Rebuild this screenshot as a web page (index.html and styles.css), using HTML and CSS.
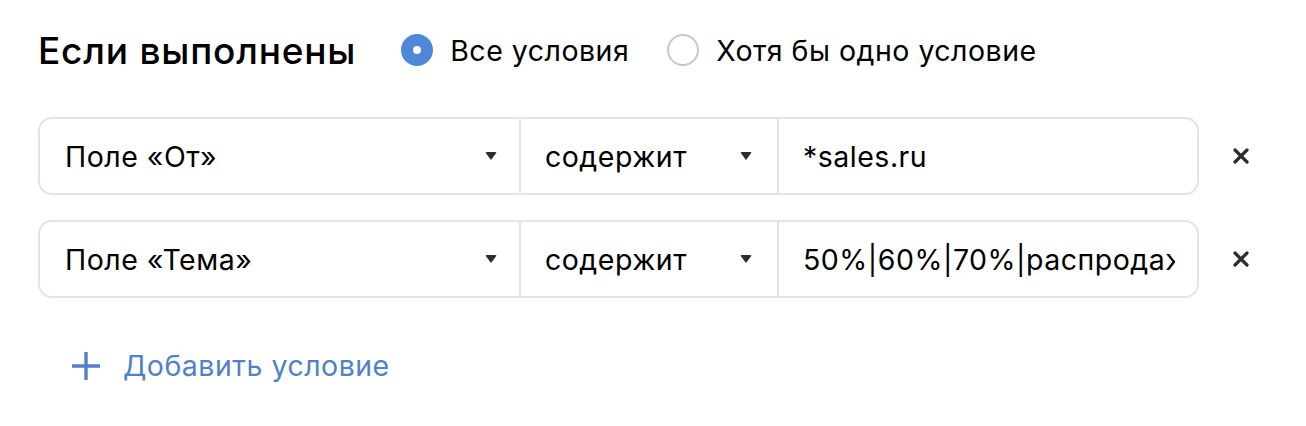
FILE: index.html
```html
<!DOCTYPE html>
<html lang="ru">
<head>
<meta charset="utf-8">
<link rel="stylesheet" href="styles.css">
</head>
<body>
<div class="page">
  <div class="header">
    <h2 class="title">Если выполнены</h2>
    <label class="radio checked"><span class="dot"></span><span>Все условия</span></label>
    <label class="radio"><span class="dot"></span><span>Хотя бы одно условие</span></label>
  </div>
  <div class="rows">
    <div class="row">
      <div class="cond">
        <div class="cell field"><span>Поле «От»</span><span class="arrow"></span></div>
        <div class="cell op"><span>содержит</span><span class="arrow"></span></div>
        <div class="cell value"><span class="val">*sales.ru</span></div>
      </div>
      <button class="remove" aria-label="Удалить"><svg width="16" height="16" viewBox="0 0 16 16"><path d="M2 2L14 14M14 2L2 14" stroke="#2c2d2e" stroke-width="3.2" stroke-linecap="round"/></svg></button>
    </div>
    <div class="row">
      <div class="cond">
        <div class="cell field"><span>Поле «Тема»</span><span class="arrow"></span></div>
        <div class="cell op"><span>содержит</span><span class="arrow"></span></div>
        <div class="cell value"><span class="val">50%|60%|70%|распродажа</span></div>
      </div>
      <button class="remove" aria-label="Удалить"><svg width="16" height="16" viewBox="0 0 16 16"><path d="M2 2L14 14M14 2L2 14" stroke="#2c2d2e" stroke-width="3.2" stroke-linecap="round"/></svg></button>
    </div>
  </div>
  <a class="add" href="#"><svg width="28" height="28" viewBox="0 0 28 28"><path d="M14 0V28M0 14H28" stroke="#5181c8" stroke-width="3.4"/></svg><span>Добавить условие</span></a>
</div>
</body>
</html>
```
FILE: styles.css
```css
* { box-sizing: border-box; }
html, body { margin: 0; padding: 0; background: #fff; }
body { font-family: Inter, Roboto, "Noto Sans", sans-serif; color: #000; }
.page { padding: 24px 0 0 38px; width: 1306px; height: 426px; }
.header { display: flex; align-items: center; height: 52px; }
.title { margin: 0; font-family: Inter, Roboto, sans-serif; font-weight: 500; font-size: 37px; letter-spacing: 0.8px; margin-right: 45px; color: #000; }
.radio { display: flex; align-items: center; gap: 17px; font-size: 28.5px; letter-spacing: 0.5px; margin-right: 38px; color: #000; }
.dot { width: 32px; height: 32px; border-radius: 50%; border: 2px solid #c4c8cc; display: inline-block; flex: none; }
.radio.checked .dot { border: 12px solid #4f87d9; background: #fff; }
.rows { margin-top: 41px; display: flex; flex-direction: column; gap: 25px; }
.row { display: flex; align-items: center; }
.cond { display: grid; grid-template-columns: 479px 258px 420px; height: 78px; border: 2px solid #e3e4e6; border-radius: 14px; }
.cell { display: flex; align-items: center; justify-content: space-between; padding: 0 22px 0 25px; font-size: 28.5px; letter-spacing: 0.5px; color: #000; overflow: hidden; white-space: nowrap; }
.cell + .cell { border-left: 2px solid #e3e4e6; }
.op { padding-left: 24px; padding-right: 25px; }
.value { padding-left: 24px; padding-right: 0; justify-content: flex-start; }
.val { overflow: hidden; text-overflow: clip; white-space: nowrap; width: 372px; }
.arrow { width: 0; height: 0; border-left: 6px solid transparent; border-right: 6px solid transparent; border-top: 8px solid #2c2d2e; border-radius: 2px; }
.remove { margin-left: 34px; width: 16px; height: 16px; padding: 0; border: 0; background: none; display: flex; }
.add { display: flex; align-items: center; gap: 23px; margin: 50px 0 0 34px; color: #5181c8; font-size: 28.5px; letter-spacing: 0.5px; text-decoration: none; }
```
